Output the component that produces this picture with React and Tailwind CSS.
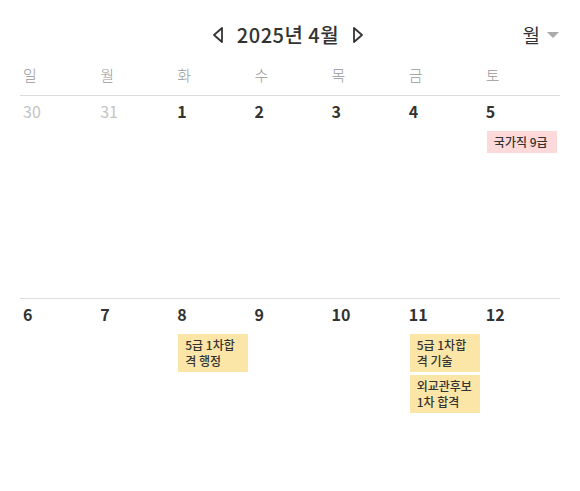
import React from "react";

const font = { fontFamily: '"Noto Sans CJK KR", "Noto Sans", sans-serif' };

function Ev({ children, pink }) {
  return (
    <div
      className={`ml-[4px] mr-[3px] px-[7px] py-[3px] text-[12px] leading-[16px] font-medium text-[#333] whitespace-nowrap overflow-hidden ${
        pink ? "bg-[#fdd9d9]" : "bg-[#fbe6a7]"
      }`}
    >
      {children}
    </div>
  );
}

export default function App() {
  const week1 = [
    { d: "30", muted: true },
    { d: "31", muted: true },
    { d: "1" },
    { d: "2" },
    { d: "3" },
    { d: "4" },
    { d: "5", ev: [{ t: "국가직 9급", pink: true }] },
  ];
  const week2 = [
    { d: "6" },
    { d: "7" },
    { d: "8", ev: [{ t: ["5급 1차합", "격 행정"] }] },
    { d: "9" },
    { d: "10" },
    { d: "11", ev: [{ t: ["5급 1차합", "격 기술"] }, { t: ["외교관후보", "1차 합격"] }] },
    { d: "12" },
  ];
  const days = ["일", "월", "화", "수", "목", "금", "토"];
  const Week = ({ data }) => (
    <div className="grid grid-cols-7 h-[203px] border-t-[1.5px] border-[#dcdcdc]">
      {data.map((c, i) => (
        <div key={i} className="flex flex-col">
          <div
            className={`pl-[3px] pt-[3px] h-[27px] text-[16px] leading-[24px] ${
              c.muted ? "text-[#c4c4c4] font-normal" : "text-[#333] font-semibold"
            }`}
          >
            {c.d}
          </div>
          <div className="mt-[8px] flex flex-col gap-[3px]">
            {(c.ev || []).map((e, j) => (
              <Ev key={j} pink={e.pink}>
                {Array.isArray(e.t) ? (
                  <>
                    <div>{e.t[0]}</div>
                    <div>{e.t[1]}</div>
                  </>
                ) : (
                  e.t
                )}
              </Ev>
            ))}
          </div>
        </div>
      ))}
    </div>
  );
  return (
    <div className="w-[580px] h-[491px] overflow-hidden bg-white px-[20px]" style={font}>
      <div className="relative h-[55px] pt-[20px]">
        <div className="flex items-center justify-center gap-[12px] h-[30px] pr-[4px]">
          <svg width="12" height="18" viewBox="0 0 12 18">
            <path d="M10 2 L2 9 L10 16 Z" fill="none" stroke="#333" strokeWidth="1.8" strokeLinejoin="round" />
          </svg>
          <span className="text-[20px] font-medium text-[#333] leading-[30px] mx-[1px] tracking-[0.5px]">2025년 4월</span>
          <svg width="12" height="18" viewBox="0 0 12 18">
            <path d="M2 2 L10 9 L2 16 Z" fill="none" stroke="#333" strokeWidth="1.8" strokeLinejoin="round" />
          </svg>
        </div>
        <div className="absolute right-0 top-[20px] h-[30px] flex items-center gap-[6px]">
          <span className="text-[19px] text-[#333] font-normal leading-[30px]">월</span>
          <svg width="14" height="8" viewBox="0 0 14 8">
            <path d="M1 1 L13 1 L7 7 Z" fill="#aaa" />
          </svg>
        </div>
      </div>
      <div className="grid grid-cols-7 h-[40px] items-center">
        {days.map((d) => (
          <div key={d} className="pl-[3px] text-[15px] font-light text-[#999] leading-[36px]">
            {d}
          </div>
        ))}
      </div>
      <Week data={week1} />
      <Week data={week2} />
    </div>
  );
}
